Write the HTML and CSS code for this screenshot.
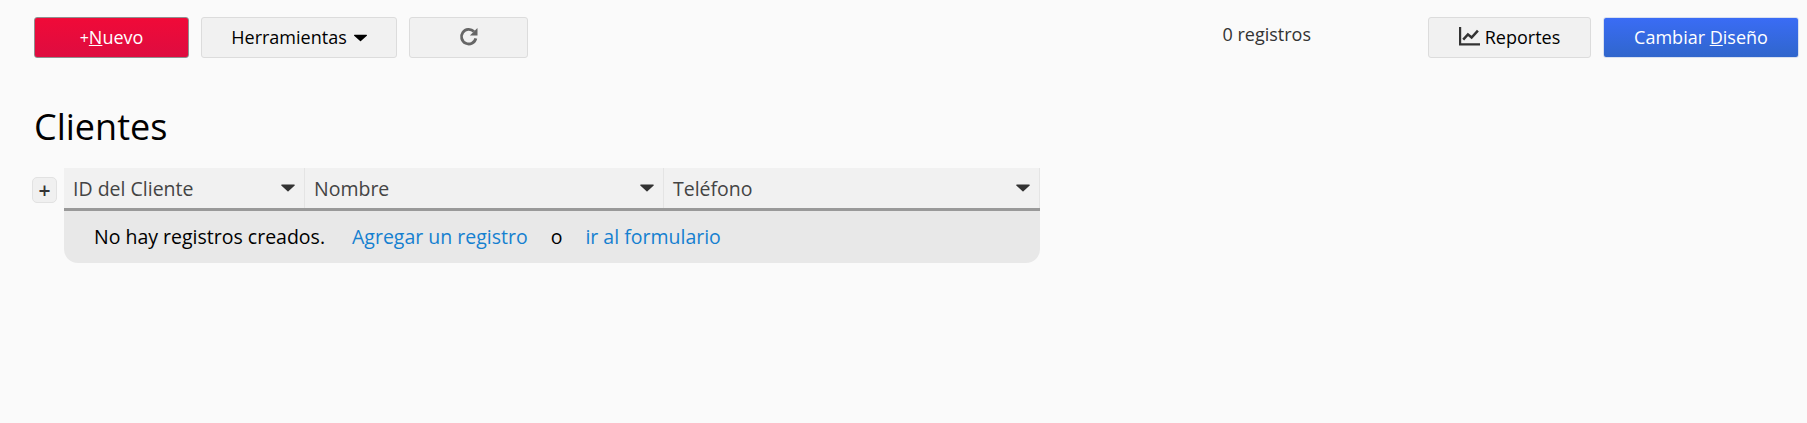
FILE: index.html
```html
<!DOCTYPE html>
<html lang="es">
<head>
<meta charset="utf-8">
<title>Clientes</title>
<link rel="stylesheet" href="styles.css">
</head>
<body>
<div class="toolbar">
  <button class="btn btn-new"><span><span class="plus">+</span><u>N</u>uevo</span></button>
  <button class="btn btn-tools">Herramientas<svg class="caret" viewBox="0 0 12 7"><path d="M0.5 0.5h11a.5.5 0 0 1 .35.85L6.4 6.3a.6.6 0 0 1-.8 0L.15 1.35A.5.5 0 0 1 .5.5z"/></svg></button>
  <button class="btn btn-refresh" aria-label="Actualizar"><svg viewBox="0 0 20 20" class="refresh"><path d="M16.2 11.2a6.6 6.6 0 1 1-1.7-6.1" fill="none" stroke="#666" stroke-width="2.6"/><path d="M17.7 1.8v6.9h-6.9z" fill="#666"/></svg></button>
  <span class="count">0 registros</span>
  <button class="btn btn-reports"><svg viewBox="0 0 20 18" class="chart"><path d="M1 0v16.5h19" fill="none" stroke="#333" stroke-width="2.2"/><path d="M4 12l4.5-5 3.5 3 6-6.5" fill="none" stroke="#333" stroke-width="2.4"/></svg>Reportes</button>
  <button class="btn btn-design"><span>Cambiar <u>D</u>iseño</span></button>
</div>
<h1 class="title">Clientes</h1>
<div class="grid-wrap">
  <button class="add-col">+</button>
  <div class="grid">
    <div class="head">
      <div class="col col-id">ID del Cliente<svg class="caret dark" viewBox="0 0 12 7"><path d="M0.5 0.5h11a.5.5 0 0 1 .35.85L6.4 6.3a.6.6 0 0 1-.8 0L.15 1.35A.5.5 0 0 1 .5.5z"/></svg></div>
      <div class="col col-name">Nombre<svg class="caret dark" viewBox="0 0 12 7"><path d="M0.5 0.5h11a.5.5 0 0 1 .35.85L6.4 6.3a.6.6 0 0 1-.8 0L.15 1.35A.5.5 0 0 1 .5.5z"/></svg></div>
      <div class="col col-phone">Teléfono<svg class="caret dark" viewBox="0 0 12 7"><path d="M0.5 0.5h11a.5.5 0 0 1 .35.85L6.4 6.3a.6.6 0 0 1-.8 0L.15 1.35A.5.5 0 0 1 .5.5z"/></svg></div>
    </div>
    <div class="empty">
      <span>No hay registros creados.</span>
      <a href="#">Agregar un registro</a>
      <span>o</span>
      <a href="#">ir al formulario</a>
    </div>
  </div>
</div>
</body>
</html>
```
FILE: styles.css
```css
* { box-sizing: border-box; }
html, body { margin: 0; height: 100%; }
body {
  background: #fafafa;
  font-family: "Open Sans", "Noto Sans", sans-serif;
  color: #000;
  overflow: hidden;
}
.toolbar {
  display: flex;
  align-items: flex-start;
  padding: 17px 8px 0 34px;
}
.btn {
  height: 41px;
  border: 1px solid #dcdcdc;
  border-radius: 3px;
  background: #f1f1f1;
  font: 18px "Open Sans", "Noto Sans", sans-serif;
  color: #000;
  padding: 0 0 2px;
  display: flex;
  align-items: center;
  justify-content: center;
}
.btn-new {
  width: 155px;
  margin-right: 12px;
  background: linear-gradient(#f00a38, #de0c40);
  border-color: #8f8f8f;
  color: #fff;
}
.plus { font-size: 16px; }
.btn-tools { width: 196px; margin-right: 12px; }
.btn-refresh { width: 119px; }
.refresh { width: 22px; height: 22px; }
.caret { width: 13px; height: 8px; margin-left: 7px; margin-top: 2px; fill: #000; }
.count {
  margin-left: auto;
  margin-right: 117px;
  margin-top: 5px;
  font-size: 18px;
  color: #333;
}
.btn-reports { width: 163px; margin-right: 12px; }
.chart { width: 21px; height: 19px; margin-right: 5px; }
.btn-design {
  width: 196px;
  background: linear-gradient(#3a6cf5, #3066cc);
  border-color: #d8e0f0;
  color: #fff;
}
.title {
  margin: 46px 0 0 34px;
  font-size: 36px;
  line-height: 45px;
  font-weight: 400;
}
.grid-wrap {
  display: flex;
  align-items: flex-start;
  margin: 19px 0 0 32px;
}
.add-col {
  width: 25px;
  height: 26px;
  margin: 9px 7px 0 0;
  padding: 0;
  border: 1px solid #e2e2e2;
  border-radius: 5px;
  background: #f0f0f0;
  font: 600 21px/1 "Open Sans", sans-serif;
  color: #333;
}
.grid { width: 976px; }
.head {
  display: flex;
  height: 43px;
  background: #f1f1f1;
  border-bottom: 3px solid #999;
}
.col {
  display: flex;
  align-items: center;
  justify-content: space-between;
  padding: 0 9px 0 9px;
  font-size: 19.5px;
  color: #444;
  border-right: 1px solid #e4e4e4;
}
.col-id { width: 241px; }
.col-name { width: 359px; }
.col-phone { flex: 1; }
.caret.dark { width: 14px; height: 8px; fill: #333; margin: 0; }
.empty {
  display: flex;
  align-items: center;
  height: 52px;
  padding: 0 0 2px 30px;
  background: #e8e8e8;
  border-radius: 0 0 14px 14px;
  font-size: 19.5px;
}
.empty span:nth-of-type(2) { margin: 0 23px; }
.empty a { color: #1580d0; text-decoration: none; margin-left: 27px; }
.empty span + a + span + a { margin-left: 0; }
```
